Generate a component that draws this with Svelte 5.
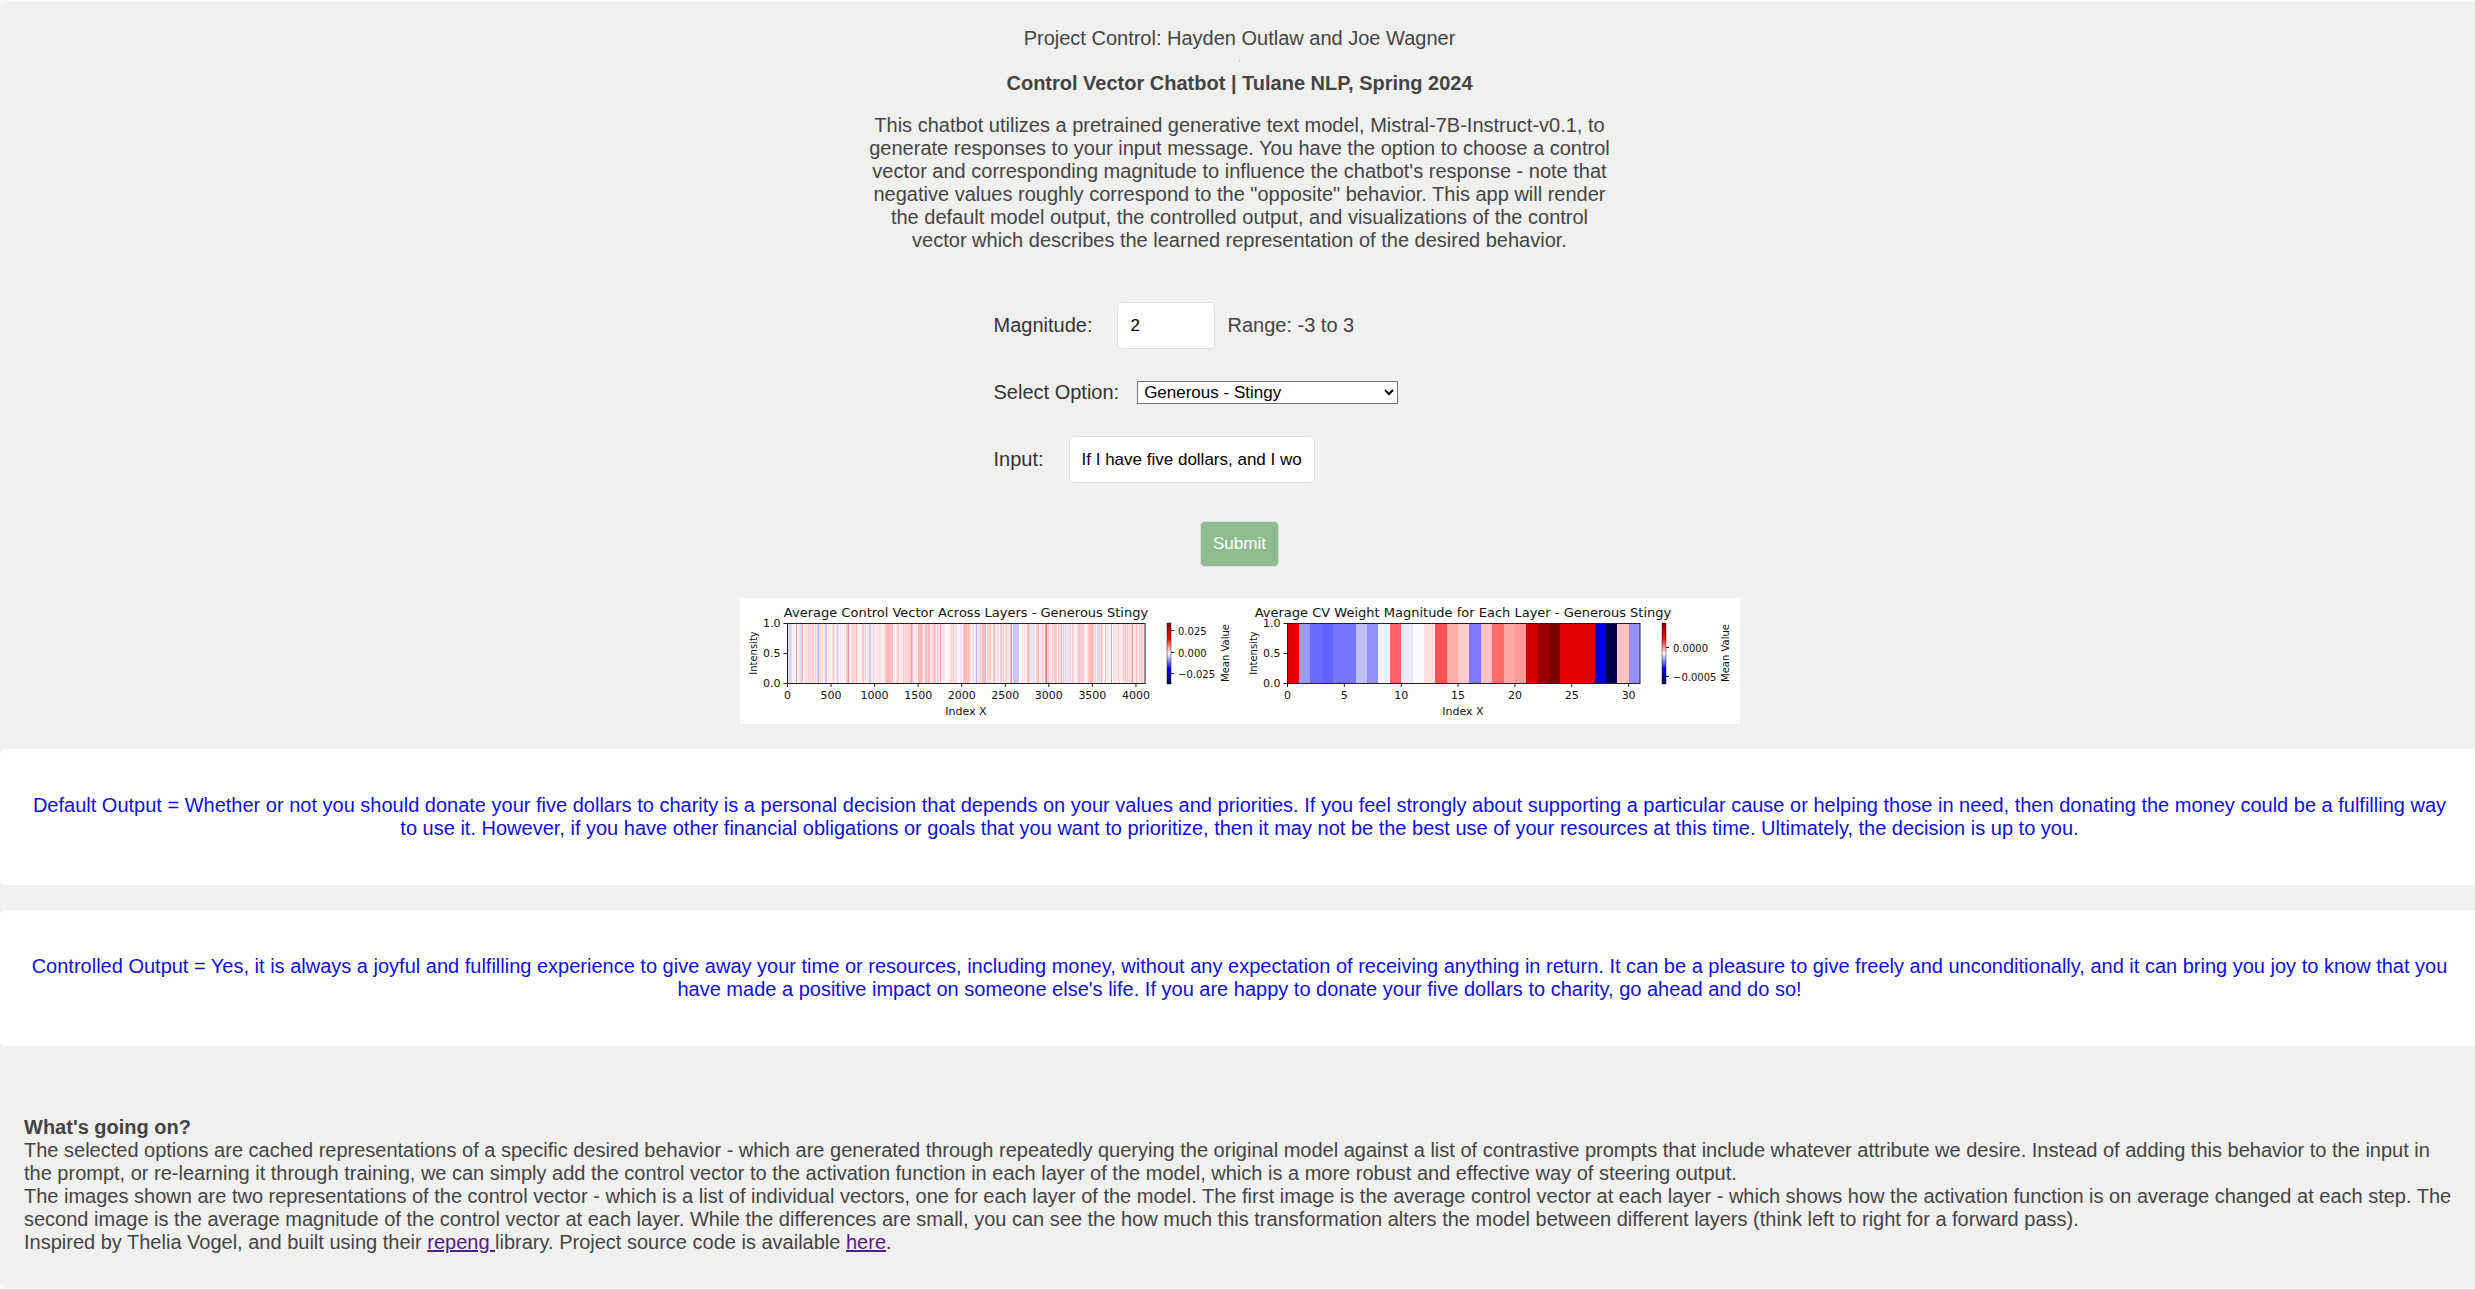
<script>
  let magnitude = $state('2');
  let option = $state('Generous - Stingy');
  let message = $state('If I have five dollars, and I wonder whether to donate it, what should I do?');

  const palette = {
    w: '#fff4f4', p: '#ffe2e4', q: '#ffcccc', r: '#ffb8b8', d: '#e6a0a4',
    D: '#d98080', b: '#c8c8ff', c: '#b4b4f0', l: '#eee8fa', v: '#e0d8f0', m: '#ecc4d4'
  };

  // One letter per stripe of the averaged vector, left to right.
  const stripes = (
    'vvvvwwpwdw' + 'lpvqrwpppp' + 'qpqpqqwqpq' + 'cpqwpwlbbw' + 'pwwwpqpwlb' + 'lwpwlwlwqr' +
    'dpwpqqqprp' + 'wlwwqmpqwp' + 'lbblwqpwlp' + 'ppplwlpqrr' + 'rrrqrwlwpq' + 'qwlpwqpqqp' +
    'qqmdmplppw' + 'rrrrqplmrq' + 'mrplqqrqwb' + 'pwdwwplwww' + 'wppqpqplvw' + 'wwplwqrrrq' +
    'rqplpvwpcl' + 'lvqprrrrlq' + 'pvqlwqrpwl' + 'vwqqpqwpqp' + 'lprdlbbbbb' + 'bwwwpwpwpq' +
    'rvlplvlwqq' + 'rplpqpldDv' + 'mpvpqpqmqw' + 'mpvrpqlvlp' + 'vpvlqvlwpp' + 'qmqvmqlwwp' +
    'qrrrrqpqwq' + 'pqpbpwwrwp' + 'wwwdwplppw' + 'qppwpqpqpq' + 'pqpqdpwprp' + 'wqpqqpw'
  ).split('').map((k) => palette[k]);

  const layers = [
    '#e40000', '#9c9cff', '#6a6aff', '#6262ff', '#7474ff', '#7474ff', '#c0c0ff', '#9292ff',
    '#f4f2ff', '#ff6262', '#eaeaff', '#faf8ff', '#ffe0e0', '#ff5252', '#ffacac', '#ffcaca',
    '#7a7aff', '#ffc2c2', '#ff6a6a', '#ffa8a8', '#ff9a9a', '#d40000', '#9c0000', '#7c0000',
    '#e40000', '#e40000', '#dc0000', '#0000d8', '#00004c', '#ffc0c0', '#9292ff'
  ];

  const plots = [
    {
      title: 'Average Control Vector Across Layers - Generous Stingy',
      left: 47.5, width: 357.5, mid: 226, colors: stripes, max: 4104,
      ticks: [0, 500, 1000, 1500, 2000, 2500, 3000, 3500, 4000],
      bar: 427, legend: [[32.5, '0.025'], [54.5, '0.000'], [75.5, '−0.025']], unit: 489
    },
    {
      title: 'Average CV Weight Magnitude for Each Layer - Generous Stingy',
      left: 547.5, width: 352.5, mid: 723, colors: layers, max: 31,
      ticks: [0, 5, 10, 15, 20, 25, 30],
      bar: 922, legend: [[49.5, '0.0000'], [78.5, '−0.0005']], unit: 989
    }
  ];
</script>

<main class="page">
  <header class="intro">
    <p>Project Control: Hayden Outlaw and Joe Wagner</p>
    <span class="dot">'</span>
    <h1>Control Vector Chatbot | Tulane NLP, Spring 2024</h1>
    <p class="about">
      This chatbot utilizes a pretrained generative text model, Mistral-7B-Instruct-v0.1, to generate
      responses to your input message. You have the option to choose a control vector and corresponding
      magnitude to influence the chatbot's response - note that negative values roughly correspond to the
      "opposite" behavior. This app will render the default model output, the controlled output, and
      visualizations of the control vector which describes the learned representation of the desired
      behavior.
    </p>
  </header>

  <form class="form" onsubmit={(e) => e.preventDefault()}>
    <div class="row">
      <label for="magnitude">Magnitude:</label>
      <input id="magnitude" class="field short" type="text" inputmode="numeric" bind:value={magnitude} />
      <span class="range">Range: -3 to 3</span>
    </div>
    <div class="row select-row">
      <label for="option">Select Option:</label>
      <select id="option" bind:value={option}>
        <option>Generous - Stingy</option>
      </select>
    </div>
    <div class="row">
      <label for="message">Input:</label>
      <input id="message" class="field" type="text" bind:value={message} />
    </div>
    <button type="submit">Submit</button>
  </form>

  <svg class="charts" viewBox="0 0 1000 126" role="img" aria-label="Control vector visualizations">
    <defs>
      <linearGradient id="seismic" x1="0" y1="0" x2="0" y2="1">
        <stop offset="0" stop-color="#800000" />
        <stop offset="0.25" stop-color="#ff0000" />
        <stop offset="0.5" stop-color="#ffffff" />
        <stop offset="0.75" stop-color="#0000ff" />
        <stop offset="1" stop-color="#00004c" />
      </linearGradient>
    </defs>
    {#each plots as plot}
      {@const step = plot.width / plot.colors.length}
      <text class="title" x={plot.mid} y="19" text-anchor="middle">{plot.title}</text>
      <g shape-rendering="crispEdges">
        {#each plot.colors as color, i}
          <rect x={plot.left + i * step} y="25" width={step + 0.3} height="60" fill={color} />
        {/each}
      </g>
      <rect class="frame" x={plot.left} y="25.5" width={plot.width} height="60" />
      {#each ['1.0', '0.5', '0.0'] as label, i}
        <path class="tick" d="M{plot.left - 4} {25.5 + i * 30}h4" />
        <text x={plot.left - 7} y={29 + i * 30} text-anchor="end">{label}</text>
      {/each}
      {#each plot.ticks as tick}
        {@const x = plot.left + (tick / plot.max) * plot.width}
        <path class="tick" d="M{x} 85v4" />
        <text {x} y="101" text-anchor="middle">{tick}</text>
      {/each}
      <text x={plot.mid} y="117" text-anchor="middle">Index X</text>
      <text class="small" transform="translate({plot.left - 31} 55) rotate(-90)" text-anchor="middle">Intensity</text>
      <rect class="scale" x={plot.bar} y="25" width="4" height="61" fill="url(#seismic)" />
      {#each plot.legend as [y, label]}
        <path class="tick" d="M{plot.bar + 4} {y}h3" />
        <text class="small" x={plot.bar + 11} y={y + 4}>{label}</text>
      {/each}
      <text class="small" transform="translate({plot.unit} 55) rotate(-90)" text-anchor="middle">Mean Value</text>
    {/each}
  </svg>

  <section class="output">
    Default Output = Whether or not you should donate your five dollars to charity is a personal decision
    that depends on your values and priorities. If you feel strongly about supporting a particular cause or
    helping those in need, then donating the money could be a fulfilling way to use it. However, if you have
    other financial obligations or goals that you want to prioritize, then it may not be the best use of your
    resources at this time. Ultimately, the decision is up to you.
  </section>
  <section class="output">
    Controlled Output = Yes, it is always a joyful and fulfilling experience to give away your time or
    resources, including money, without any expectation of receiving anything in return. It can be a pleasure
    to give freely and unconditionally, and it can bring you joy to know that you have made a positive impact
    on someone else's life. If you are happy to donate your five dollars to charity, go ahead and do so!
  </section>

  <footer class="notes">
    <h2>What's going on?</h2>
    <p>
      The selected options are cached representations of a specific desired behavior - which are generated
      through repeatedly querying the original model against a list of contrastive prompts that include
      whatever attribute we desire. Instead of adding this behavior to the input in the prompt, or re-learning
      it through training, we can simply add the control vector to the activation function in each layer of
      the model, which is a more robust and effective way of steering output.
    </p>
    <p>
      The images shown are two representations of the control vector - which is a list of individual vectors,
      one for each layer of the model. The first image is the average control vector at each layer - which
      shows how the activation function is on average changed at each step. The second image is the average
      magnitude of the control vector at each layer. While the differences are small, you can see the how much
      this transformation alters the model between different layers (think left to right for a forward pass).
    </p>
    <p>
      Inspired by Thelia Vogel, and built using their <a href="#repeng">repeng&#32;</a>library. Project source
      code is available <a href="#source">here</a>.
    </p>
  </footer>
</main>

<style>
  :global(body) {
    margin: 0;
    overflow-x: hidden;
    background: #f7f7f6;
  }
  .page {
    display: flex;
    flex-direction: column;
    align-items: center;
    margin: 1px -4px 0 0;
    padding: 26px 0 34px;
    border-radius: 8px;
    background: #f0f0ef;
    color: #444;
    font: 20px/23px 'Liberation Sans', Arial, sans-serif;
  }
  p,
  h1,
  h2 {
    margin: 0;
    font-size: 20px;
    line-height: 23px;
  }
  .intro {
    display: flex;
    flex-direction: column;
    align-items: center;
    max-width: 750px;
    text-align: center;
  }
  .dot {
    height: 22px;
    font-size: 6px;
    line-height: 24px;
  }
  .about {
    margin-top: 19px;
  }
  .form {
    display: flex;
    flex-direction: column;
    gap: 32px;
    box-sizing: border-box;
    width: 492px;
    max-width: 100%;
    margin-top: 50px;
  }
  .row {
    display: flex;
    align-items: center;
    gap: 25px;
    color: #333;
  }
  .field {
    box-sizing: border-box;
    width: 246px;
    height: 47px;
    padding: 0 12px;
    border: 1px solid #ddd;
    border-radius: 5px;
    background: #fffffe;
    color: #000;
    font: 17px 'Liberation Sans', Arial, sans-serif;
  }
  .short {
    width: 98px;
  }
  .range {
    margin-left: -13px;
    color: #444;
  }
  .select-row {
    gap: 18px;
  }
  select {
    width: 261px;
    height: 23px;
    padding: 0 2px;
    border: 1px solid #767676;
    border-radius: 0;
    background: #fffffe;
    color: #000;
    font: 17px 'Liberation Sans', Arial, sans-serif;
  }
  button {
    align-self: center;
    height: 46px;
    margin-top: 6px;
    padding: 0 12px;
    border: 1px solid #ddd;
    border-radius: 5px;
    background: #8fbc8f;
    color: #fffffe;
    font: 17px 'Liberation Sans', Arial, sans-serif;
  }
  .charts {
    display: block;
    width: 100%;
    max-width: 1000px;
    margin-top: 31px;
    background: #fffffe;
    font: 11px 'DejaVu Sans', sans-serif;
    fill: #111;
  }
  .title {
    font-size: 13px;
  }
  .small {
    font-size: 10px;
  }
  .frame,
  .tick {
    fill: none;
    stroke: #222;
  }
  .scale {
    stroke: #222;
    stroke-width: 0.5;
  }
  .output {
    align-self: stretch;
    margin-top: 25px;
    padding: 45px 24px;
    border-radius: 5px;
    background: #fffffe;
    color: #1010dd;
    text-align: center;
  }
  .notes {
    align-self: stretch;
    padding: 70px 24px 0;
  }
  a {
    color: #551a8b;
  }
</style>
